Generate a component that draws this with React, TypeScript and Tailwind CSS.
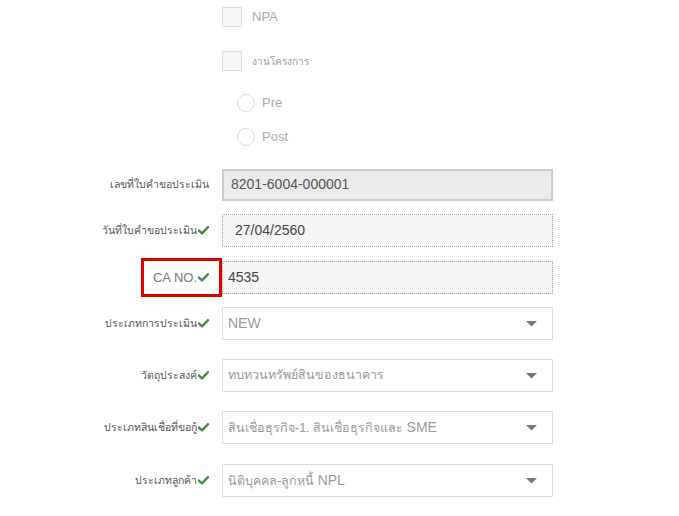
import React from "react";

const Check = () => (
  <svg width="11" height="9" viewBox="0 0 11 9" className="ml-[1px] shrink-0">
    <path d="M1 4.6 L4 7.4 L10 1.2" stroke="#4a8a45" strokeWidth="2.4" fill="none" strokeLinecap="round" strokeLinejoin="round" />
  </svg>
);

const Caret = () => (
  <svg width="11" height="6" viewBox="0 0 11 6" className="shrink-0">
    <path d="M0 0 L11 0 L5.5 5.5 Z" fill="#777" />
  </svg>
);

function Row({ label, check, mt, children, highlight }: { label: string; check?: boolean; mt: string; children: React.ReactNode; highlight?: boolean }) {
  return (
    <div className={`flex items-center h-[33px] ${mt}`}>
      <div className="w-[222px] flex justify-end pr-[13px]">
        {highlight ? (
          <div className="border-[3px] border-[#e00000] h-[39px] w-[81px] -mr-[13px] shrink-0 flex items-center justify-end pr-[10px]">
            <span className="text-[13px] leading-none text-[#777]">{label}</span>
            {check && <Check />}
          </div>
        ) : (
          <div className="flex items-center">
            <span className="text-[10.5px] leading-none text-[#555]">{label}</span>
            {check && <Check />}
          </div>
        )}
      </div>
      {children}
    </div>
  );
}

function Select({ children }: { children: React.ReactNode }) {
  return (
    <div className="w-[331px] h-[33px] border border-[#dddddd] bg-white flex items-center justify-between pl-[5px] pr-[15px]">
      <span className="text-[12.5px] leading-none text-[#999]">{children}</span>
      <Caret />
    </div>
  );
}

export default function App() {
  return (
    <div className="w-[679px] h-[516px] bg-white overflow-hidden" style={{ fontFamily: '"Liberation Sans", Arial, "Noto Sans", sans-serif' }}>
      <div className="pt-[7px]">
        <div className="flex items-center pl-[222px] h-[20px]">
          <div className="w-[20px] h-[20px] border border-[#dddddd] bg-[#f7f7f7]" />
          <span className="ml-[10px] text-[13px] text-[#aaa]">NPA</span>
        </div>
        <div className="flex items-center pl-[222px] h-[20px] mt-[24px]">
          <div className="w-[20px] h-[20px] border border-[#dddddd] bg-[#f7f7f7]" />
          <span className="ml-[10px] text-[10px] text-[#999]">งานโครงการ</span>
        </div>
        <div className="flex items-center pl-[237px] h-[18px] mt-[23px]">
          <div className="w-[18px] h-[18px] rounded-full border border-[#dddddd] bg-white" />
          <span className="ml-[7px] text-[13px] text-[#aaa]">Pre</span>
        </div>
        <div className="flex items-center pl-[237px] h-[18px] mt-[16px]">
          <div className="w-[18px] h-[18px] rounded-full border border-[#dddddd] bg-white" />
          <span className="ml-[7px] text-[13px] text-[#aaa]">Post</span>
        </div>

        <Row label="เลขที่ใบคำขอประเมิน" mt="mt-[22px]">
          <div className="w-[331px] h-[32px] border-2 border-[#cccccc] bg-[#ebebeb] flex items-center pl-[7px]">
            <span className="text-[14px] text-[#555]">8201-6004-000001</span>
          </div>
        </Row>
        <Row label="วันที่ใบคำขอประเมิน" check mt="mt-[13px]">
          <div className="w-[331px] h-[33px] border border-dotted border-[#8daa8d] bg-[#f5f5f5] flex items-center pl-[12px]">
            <span className="text-[14px] text-[#444]">27/04/2560</span>
          </div>
        </Row>
        <Row label="CA NO." check highlight mt="mt-[14px]">
          <div className="w-[331px] h-[33px] border border-dotted border-[#8daa8d] bg-[#f5f5f5] flex items-center pl-[5px]">
            <span className="text-[14px] text-[#444]">4535</span>
          </div>
        </Row>
        <Row label="ประเภทการประเมิน" check mt="mt-[13px]">
          <Select><span className="text-[14px]">NEW</span></Select>
        </Row>
        <Row label="วัตถุประสงค์" check mt="mt-[19px]">
          <Select>ทบทวนทรัพย์สินของธนาคาร</Select>
        </Row>
        <Row label="ประเภทสินเชื่อที่ขอกู้" check mt="mt-[19px]">
          <Select>สินเชื่อธุรกิจ-1. สินเชื่อธุรกิจและ <span className="text-[14px]">SME</span></Select>
        </Row>
        <Row label="ประเภทลูกค้า" check mt="mt-[20px]">
          <Select>นิติบุคคล-ลูกหนี้ <span className="text-[14px]">NPL</span></Select>
        </Row>
      </div>
    </div>
  );
}
